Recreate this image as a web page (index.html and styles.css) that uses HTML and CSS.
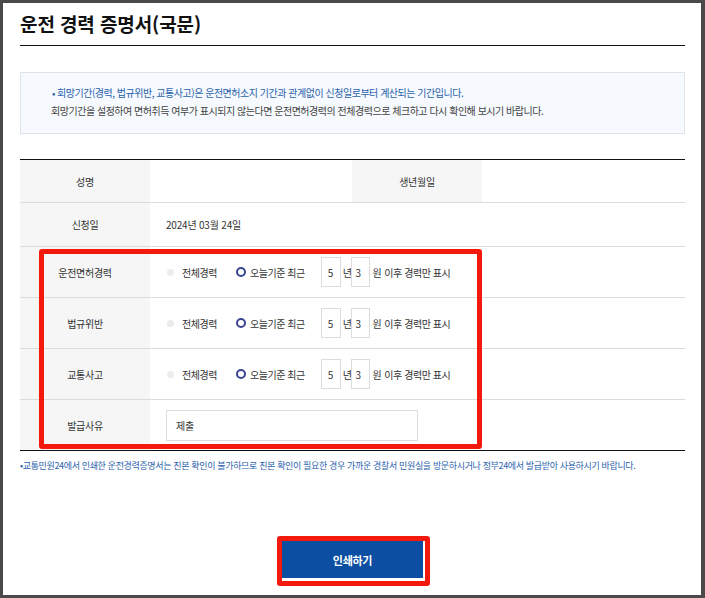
FILE: index.html
```html
<!DOCTYPE html>
<html lang="ko">
<head>
<meta charset="utf-8">
<title>운전 경력 증명서(국문)</title>
<link rel="stylesheet" href="styles.css">
</head>
<body>
<div class="frame">
  <div class="content">
    <h1 class="title">운전 경력 증명서(국문)</h1>

    <div class="info">
      <p class="info-line blue"><span class="bullet">•</span>회망기간(경력, 법규위반, 교통사고)은 운전면허소지 기간과 관계없이 신청일로부터 계산되는 기간입니다.</p>
      <p class="info-line gray">회망기간을 설정하여 면허취득 여부가 표시되지 않는다면 운전면허경력의 전체경력으로 체크하고 다시 확인해 보시기 바랍니다.</p>
    </div>

    <div class="form-table">
      <div class="row row-top">
        <div class="th">성명</div>
        <div class="td"></div>
        <div class="th">생년월일</div>
        <div class="td"></div>
      </div>
      <div class="row row-short">
        <div class="th">신청일</div>
        <div class="td">2024년 03월 24일</div>
      </div>
      <div class="row">
        <div class="th">운전면허경력</div>
        <div class="td options">
          <span class="radio-off"></span><span class="opt-label">전체경력</span>
          <span class="radio-on"></span><span class="opt-label">오늘기준 최근</span>
          <span class="num">5</span><span class="unit">년</span><span class="num num-month">3</span><span class="unit unit-month">원</span><span class="tail">이후 경력만 표시</span>
        </div>
      </div>
      <div class="row">
        <div class="th">법규위반</div>
        <div class="td options">
          <span class="radio-off"></span><span class="opt-label">전체경력</span>
          <span class="radio-on"></span><span class="opt-label">오늘기준 최근</span>
          <span class="num">5</span><span class="unit">년</span><span class="num num-month">3</span><span class="unit unit-month">원</span><span class="tail">이후 경력만 표시</span>
        </div>
      </div>
      <div class="row">
        <div class="th">교통사고</div>
        <div class="td options">
          <span class="radio-off"></span><span class="opt-label">전체경력</span>
          <span class="radio-on"></span><span class="opt-label">오늘기준 최근</span>
          <span class="num">5</span><span class="unit">년</span><span class="num num-month">3</span><span class="unit unit-month">원</span><span class="tail">이후 경력만 표시</span>
        </div>
      </div>
      <div class="row row-last">
        <div class="th">발급사유</div>
        <div class="td">
          <div class="reason">제출</div>
        </div>
      </div>
    </div>

    <p class="note">•교통민원24에서 인쇄한 운전경력증명서는 진본 확인이 불가하므로 진본 확인이 필요한 경우 가까운 경찰서 민원실을 방문하시거나 정부24에서 발급받아 사용하시기 바랍니다.</p>

    <div class="actions">
      <button class="print-btn" type="button">인쇄하기</button>
    </div>
  </div>

  <div class="mark mark-form"></div>
  <div class="mark mark-btn"></div>
</div>
</body>
</html>
```

FILE: styles.css
```css
* { box-sizing: border-box; }

html, body {
  margin: 0;
  padding: 0;
  background: #4a4a4a;
}

body {
  font-family: "Noto Sans CJK KR", "Noto Sans", "Liberation Sans", sans-serif;
  color: #333;
}

.frame {
  position: relative;
  width: 705px;
  height: 598px;
  border-style: solid;
  border-color: #4a4a4a;
  border-width: 3px 4px 3px 3px;
  background: #fff;
}

.content {
  padding: 0 16px 0 17px;
}

.title {
  margin: 0;
  height: 43px;
  padding-top: 9px;
  font-size: 19px;
  line-height: 24px;
  font-weight: bold;
  letter-spacing: -0.1px;
  color: #111;
  border-bottom: 1px solid #111;
}

.info {
  margin-top: 26px;
  height: 62px;
  border: 1px solid #dfe3ea;
  background: #f6f9fd;
  padding: 11px 0 0 30px;
}

.info-line {
  margin: 0;
  font-size: 10px;
  line-height: 18px;
  letter-spacing: -0.48px;
  white-space: nowrap;
}

.info-line.blue { color: #2a62ad; }
.info-line.gray { color: #444; }

.bullet {
  display: inline-block;
  width: 6px;
  margin-left: 1px;
  margin-right: -1px;
}

.form-table {
  margin-top: 25px;
  border-top: 1px solid #111;
}

.row {
  display: grid;
  grid-template-columns: 130px 1fr;
  height: 51px;
  border-bottom: 1px solid #dcdcdc;
}

.row-top {
  grid-template-columns: 130px 202px 130px 1fr;
  height: 43px;
}

.row-short {
  height: 44px;
}

.row-last {
  border-bottom: 1px solid #111;
}

.th {
  display: flex;
  align-items: center;
  justify-content: center;
  background: #f6f6f6;
  font-size: 10px;
  letter-spacing: -0.3px;
  color: #333;
}

.td {
  display: flex;
  align-items: center;
  padding-left: 16px;
  font-size: 10px;
  letter-spacing: -0.2px;
  color: #333;
}

.options {
  letter-spacing: -0.45px;
}

.radio-off {
  width: 7px;
  height: 7px;
  border-radius: 50%;
  background: #ececec;
  margin-left: 1px;
}

.opt-label {
  margin-left: 8px;
}

.radio-on {
  width: 10px;
  height: 10px;
  border-radius: 50%;
  border: 2.5px solid #3a4490;
  background: #fff;
  margin-left: 19px;
}

.radio-on + .opt-label {
  margin-left: 4px;
}

.num {
  width: 20px;
  height: 30px;
  border: 1px solid #dcdcdc;
  display: flex;
  align-items: center;
  padding-left: 6px;
  margin-left: 16px;
}

.unit {
  margin-left: 2px;
}

.num-month {
  width: 19px;
  padding-left: 4px;
  margin-left: -1px;
}

.unit-month {
  margin-left: 3px;
}

.tail {
  margin-left: 3px;
}

.reason {
  width: 252px;
  height: 31px;
  border: 1px solid #dcdcdc;
  display: flex;
  align-items: center;
  padding-left: 9px;
}

.note {
  margin: 9px 0 0;
  font-size: 9px;
  line-height: 12px;
  letter-spacing: -0.35px;
  color: #2a62ad;
  white-space: nowrap;
}

.actions {
  display: flex;
  justify-content: center;
  margin-top: 68px;
}

.print-btn {
  margin: 0;
  padding: 0;
  width: 143px;
  height: 39px;
  border: 1px solid #fff;
  background: #0c4fa2;
  color: #fff;
  font-family: inherit;
  font-size: 11px;
  font-weight: bold;
  letter-spacing: -0.3px;
}

.mark {
  position: absolute;
  z-index: 2;
  border: 5px solid #f3190d;
  border-radius: 3px;
}

.mark-form {
  left: 36px;
  top: 246px;
  width: 443px;
  height: 200px;
}

.mark-btn {
  left: 274px;
  top: 533px;
  width: 153px;
  height: 50px;
}
```
